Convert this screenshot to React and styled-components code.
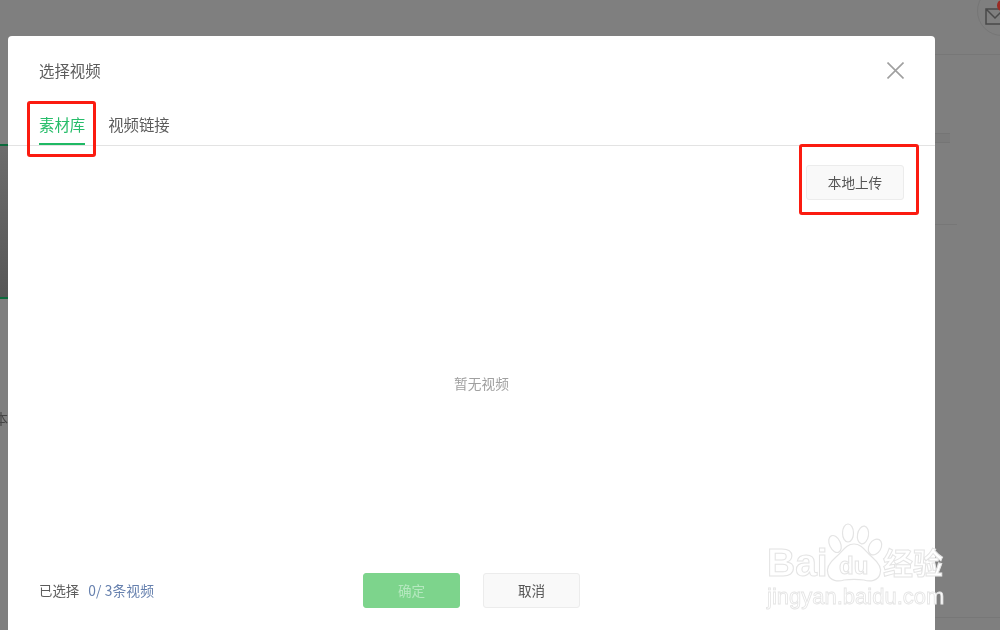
import React from "react";
import styled, { createGlobalStyle } from "styled-components";

const Global = createGlobalStyle`
  html, body { margin: 0; padding: 0; background: #7f7f7f; }
  body { font-family: "Noto Sans CJK SC", "Liberation Sans", sans-serif; }
`;

const Page = styled.div`
  position: relative;
  width: 1000px;
  height: 630px;
  overflow: hidden;
  background: #7f7f7f;
  display: flex;
  filter: blur(0.45px);
`;

const LeftStrip = styled.div`
  width: 8px;
  flex: none;
  overflow: hidden;
  display: flex;
  flex-direction: column;
`;
const StripTop = styled.div`
  height: 144px;
  flex: none;
`;
const StripBand = styled.div`
  height: 155px;
  flex: none;
  border-top: 2px solid #0c6a3c;
  border-bottom: 2px solid #0c6a3c;
  box-sizing: border-box;
  background: linear-gradient(180deg, #6c6c6c, #565656);
`;
const StripLabel = styled.span`
  margin: 109px 0 0 -6px;
  font-size: 14px;
  line-height: 20px;
  white-space: nowrap;
  color: #444;
`;

const Modal = styled.section`
  width: 927px;
  height: 594px;
  margin-top: 36px;
  flex: none;
  background: #fff;
  border-radius: 4px 4px 0 0;
  display: flex;
  flex-direction: column;
`;

const Header = styled.header`
  height: 69px;
  flex: none;
  padding: 0 31px;
  display: flex;
  align-items: center;
  justify-content: space-between;
`;
const Title = styled.h2`
  margin: 0;
  padding-bottom: 1px;
  font-size: 15.4px;
  font-weight: 400;
  color: #5c5c5c;
`;
const Close = styled.button`
  border: 0;
  background: none;
  padding: 0;
  width: 17px;
  height: 17px;
  display: block;
  svg { display: block; }
`;

const Tabs = styled.nav`
  height: 40px;
  flex: none;
  padding: 0 31px;
  display: flex;
  gap: 23px;
  border-bottom: 1px solid #e3e3e3;
`;
const Tab = styled.div`
  height: 40px;
  line-height: 38px;
  font-size: 15.4px;
  box-sizing: border-box;
  color: ${(p) => (p.$active ? "#27bd6a" : "#5c5c5c")};
  border-bottom: ${(p) => (p.$active ? "2px solid #1fb964" : "0")};
`;

const Body = styled.div`
  flex: 1;
  min-height: 0;
  display: flex;
  flex-direction: column;
  padding: 19px 31px 0;
`;
const Toolbar = styled.div`
  display: flex;
  justify-content: flex-end;
`;
const Button = styled.button`
  width: 98px;
  height: 35px;
  padding: 0 0 2px;
  box-sizing: border-box;
  font-family: inherit;
  font-size: 13.6px;
  border-radius: 3px;
  border: 1px solid ${(p) => (p.$primary ? "#7dd48c" : "#ececec")};
  background: ${(p) => (p.$primary ? "#7dd48c" : "#f9f9f9")};
  color: ${(p) => (p.$primary ? "#b5e8bf" : "#555")};
`;
const Empty = styled.div`
  flex: 1;
  display: flex;
  align-items: center;
  justify-content: center;
  font-size: 13.7px;
  color: #a0a0a0;
  padding: 0 0 7px 20px;
`;

const Footer = styled.footer`
  height: 57px;
  flex: none;
  display: grid;
  grid-template-columns: 324px 97px 23px 97px;
  align-items: start;
  button { width: 97px; }
`;
const Count = styled.div`
  font-size: 13.4px;
  line-height: 34px;
  color: #5c5c5c;
  display: flex;
  gap: 9px;
`;
const CountValue = styled.span`
  color: #6680ae;
  font-size: 13.8px;
  letter-spacing: 0.1px;
`;

const Overlay = styled.div`
  position: absolute;
  left: ${(p) => p.$x}px;
  top: ${(p) => p.$y}px;
  width: ${(p) => p.$w}px;
  height: ${(p) => p.$h}px;
  box-sizing: border-box;
  border: 3px solid #fb1b10;
  border-radius: 3px;
`;

const MailCorner = styled.div`
  position: absolute;
  left: 977px;
  top: -14px;
  width: 50px;
  height: 50px;
  box-sizing: border-box;
  border: 1px solid #767676;
  border-radius: 50%;
  svg { position: absolute; left: 7px; top: 21px; }
`;
const MailBadge = styled.div`
  position: absolute;
  left: 997px;
  top: 0;
  width: 10px;
  height: 11px;
  border-radius: 50%;
  background: #9a2b24;
`;
const Rule = styled.div`
  position: absolute;
  left: ${(p) => p.$x}px;
  top: ${(p) => p.$y}px;
  width: ${(p) => p.$w}px;
  height: 1px;
  background: #777;
`;
const SideChip = styled.div`
  position: absolute;
  left: 935px;
  top: 133px;
  width: 15px;
  height: 10px;
  box-sizing: border-box;
  border-top: 1px solid #757575;
  border-bottom: 1px solid #757575;
  background: #7b7b7b;
`;

const Watermark = styled.div`
  position: absolute;
  left: 767px;
  top: 522px;
  width: 200px;
  height: 90px;
`;
const WmBig = styled.span`
  position: absolute;
  left: ${(p) => p.$x}px;
  top: ${(p) => p.$y}px;
  font-family: "Liberation Sans", sans-serif;
  font-weight: 700;
  font-size: ${(p) => p.$size}px;
  line-height: 1;
  color: #fff;
  -webkit-text-stroke: 1px #e4e4e4;
  white-space: nowrap;
`;
const WmCn = styled(WmBig)`
  font-family: "Noto Sans CJK SC", sans-serif;
`;
const WmUrl = styled(WmBig)`
  font-weight: 400;
  -webkit-text-stroke: 0.8px #e4e4e4;
`;
const Paw = styled.svg`
  position: absolute;
  left: 0;
  top: 0;
`;

export default function App() {
  return (
    <Page>
      <Global />
      <LeftStrip>
        <StripTop />
        <StripBand />
        <StripLabel>本</StripLabel>
      </LeftStrip>
      <Modal>
        <Header>
          <Title>选择视频</Title>
          <Close aria-label="关闭">
            <svg width="17" height="17" viewBox="0 0 17 17" fill="none" stroke="#a0a0a0" strokeWidth="1.6">
              <path d="M0.5 0.5 16.5 16.5M16.5 0.5 0.5 16.5" />
            </svg>
          </Close>
        </Header>
        <Tabs>
          <Tab $active>素材库</Tab>
          <Tab>视频链接</Tab>
        </Tabs>
        <Body>
          <Toolbar>
            <Button>本地上传</Button>
          </Toolbar>
          <Empty>暂无视频</Empty>
          <Footer>
            <Count>
              <span>已选择</span>
              <CountValue>0/ 3条视频</CountValue>
            </Count>
            <Button $primary>确定</Button>
            <span />
            <Button>取消</Button>
          </Footer>
        </Body>
      </Modal>

      <Rule $x={935} $y={54} $w={65} />
      <Rule $x={935} $y={224} $w={22} />
      <Rule $x={935} $y={617} $w={65} />
      <SideChip />
      <MailCorner>
        <svg width="20" height="18" viewBox="0 0 20 18" fill="none" stroke="#4a4a4a" strokeWidth="1.5">
          <path d="M1 1h18v15H1zM1 1l9 9 9-9" />
        </svg>
      </MailCorner>
      <MailBadge />

      <Overlay $x={27} $y={101} $w={69} $h={56} />
      <Overlay $x={799} $y={144} $w={120} $h={71} />

      <Watermark>
        <Paw width="200" height="90" viewBox="0 0 200 90" fill="none" stroke="#e4e4e4" strokeWidth="1.2">
          <ellipse cx="68" cy="22" rx="5.5" ry="9" transform="rotate(-25 68 22)" />
          <ellipse cx="81" cy="11" rx="5.5" ry="9" />
          <ellipse cx="96" cy="13" rx="5.5" ry="9" transform="rotate(10 96 13)" />
          <ellipse cx="108" cy="25" rx="6" ry="8.5" transform="rotate(30 108 25)" />
          <path d="M87 22c8 0 11 7 18 13 7 6 10 12 8 17-2 7-10 8-16 6-7-1-13-1-20 0-6 2-14 1-16-6-2-5 1-11 8-17 7-6 10-13 18-13z" />
        </Paw>
        <WmBig $x={0} $y={21} $size={39}>Bai</WmBig>
        <WmBig $x={72} $y={32} $size={24}>du</WmBig>
        <WmCn $x={116} $y={24} $size={30}>经验</WmCn>
        <WmUrl $x={0} $y={64} $size={22}>jingyan.baidu.com</WmUrl>
      </Watermark>
    </Page>
  );
}
